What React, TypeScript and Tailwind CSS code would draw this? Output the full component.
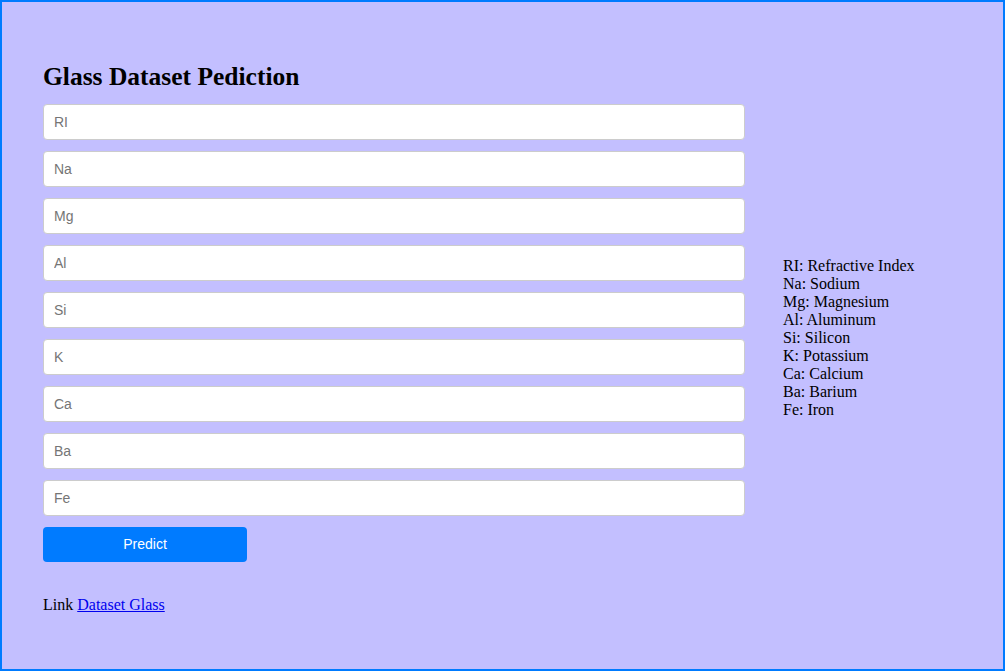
import React from "react";

const fields = ["RI", "Na", "Mg", "Al", "Si", "K", "Ca", "Ba", "Fe"];
const legend = [
  "RI: Refractive Index",
  "Na: Sodium",
  "Mg: Magnesium",
  "Al: Aluminum",
  "Si: Silicon",
  "K: Potassium",
  "Ca: Calcium",
  "Ba: Barium",
  "Fe: Iron",
];

export default function App() {
  return (
    <div className="w-[1005px] h-[671px] border-2 border-[#007bff] bg-[#c3bfff] flex items-center pl-[41px] pt-[4px] font-['Liberation_Serif',serif] text-black">
      <div className="w-[702px] flex flex-col">
        <h1 className="text-[25.5px] leading-[29px] font-bold mb-[13px] font-['Liberation_Serif',serif]">
          Glass Dataset Pediction
        </h1>
        <div className="flex flex-col gap-[11px]">
          {fields.map((f) => (
            <input
              key={f}
              placeholder={f}
              className="h-[36px] w-full bg-white border border-[#ccc] rounded-[4px] px-[10px] text-[14px] font-['Liberation_Sans',sans-serif] placeholder:text-[#757575] outline-none"
            />
          ))}
        </div>
        <button className="mt-[11px] w-[204px] h-[35px] bg-[#007bff] rounded-[4px] text-white text-[14px] font-['Liberation_Sans',sans-serif]">
          Predict
        </button>
        <p className="mt-[34px] text-[16px] leading-[18px]">
          Link{" "}
          <a href="#" className="text-[#0000ee] underline">
            Dataset Glass
          </a>
        </p>
      </div>
      <div className="ml-[38px] text-[16px] leading-[18px]">
        {legend.map((l) => (
          <div key={l}>{l}</div>
        ))}
      </div>
    </div>
  );
}
